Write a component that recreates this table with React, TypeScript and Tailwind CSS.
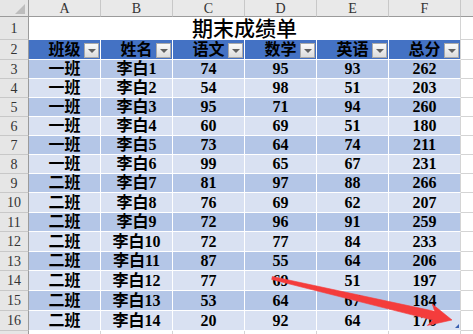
const cols = ["A", "B", "C", "D", "E", "F"];
const heads = ["班级", "姓名", "语文", "数学", "英语", "总分"];

const rows: { cells: (string | number)[]; tall: boolean }[] = [
  { cells: ["一班", "李白1", 74, 95, 93, 262], tall: false },
  { cells: ["一班", "李白2", 54, 98, 51, 203], tall: false },
  { cells: ["一班", "李白3", 95, 71, 94, 260], tall: false },
  { cells: ["一班", "李白4", 60, 69, 51, 180], tall: false },
  { cells: ["一班", "李白5", 73, 64, 74, 211], tall: false },
  { cells: ["一班", "李白6", 99, 65, 67, 231], tall: false },
  { cells: ["二班", "李白7", 81, 97, 88, 266], tall: false },
  { cells: ["二班", "李白8", 76, 69, 62, 207], tall: true },
  { cells: ["二班", "李白9", 72, 96, 91, 259], tall: false },
  { cells: ["二班", "李白10", 72, 77, 84, 233], tall: true },
  { cells: ["二班", "李白11", 87, 55, 64, 206], tall: false },
  { cells: ["二班", "李白12", 77, 69, 51, 197], tall: true },
  { cells: ["二班", "李白13", 53, 64, 67, 184], tall: true },
  { cells: ["二班", "李白14", 20, 92, 64, 176], tall: true },
];

function RowHead({ n }: { n: number }) {
  return (
    <div className="w-[29px] shrink-0 bg-[#e6e6e6] border-r border-r-[#9b9b9b] border-b border-b-[#c8c8c8] flex items-center justify-center text-[14px] text-[#333]">
      {n}
    </div>
  );
}

function Dropdown() {
  return (
    <div className="absolute right-[1px] top-[3px] w-[15px] h-[15px] border border-[#a9a9a9] bg-gradient-to-b from-[#fafafa] to-[#dcdcdc] flex items-center justify-center">
      <div className="w-0 h-0 border-l-[4px] border-r-[4px] border-t-[4px] border-l-transparent border-r-transparent border-t-[#606060]" />
    </div>
  );
}

export default function App() {
  return (
    <div className="relative w-[473px] h-[334px] overflow-hidden bg-white font-['Liberation_Serif','Noto_Sans_CJK_SC',serif] text-black">
      {/* column letters */}
      <div className="flex h-[17px]">
        <div className="relative w-[29px] shrink-0 bg-[#e6e6e6] border-r border-b border-[#9b9b9b]">
          <svg className="absolute right-[3px] bottom-[2px]" width="10" height="10" viewBox="0 0 10 10">
            <polygon points="10,0 10,10 0,10" fill="#bdbdbd" />
          </svg>
        </div>
        {cols.map((c) => (
          <div
            key={c}
            className="w-[72px] shrink-0 bg-[#e9e9e9] border-r border-r-[#c8c8c8] border-b border-b-[#9b9b9b] flex items-center justify-center text-[14px] text-[#333]"
          >
            {c}
          </div>
        ))}
        <div className="flex-1 bg-[#e9e9e9] border-b border-[#9b9b9b]" />
      </div>

      {/* title */}
      <div className="flex h-[23px]">
        <RowHead n={1} />
        <div className="w-[432px] shrink-0 border-r border-[#d4d4d4] flex items-center justify-center text-[21px] font-medium pt-[2px]">
          期末成绩单
        </div>
        <div className="flex-1 border-b border-[#d4d4d4]" />
      </div>

      {/* table header */}
      <div className="flex h-[20px]">
        <RowHead n={2} />
        {heads.map((h, i) => (
          <div
            key={h}
            className={
              "relative w-[72px] shrink-0 bg-[#4472c4] border-b border-white flex items-center justify-center text-[16px] font-bold " +
              (i === 5 ? "border-r border-r-[#d4d4d4]" : "border-r border-r-white")
            }
          >
            {h}
            <Dropdown />
          </div>
        ))}
        <div className="flex-1 border-b border-[#d4d4d4]" />
      </div>

      {/* data */}
      {rows.map((r, ri) => (
        <div key={ri} className={"flex " + (r.tall ? "h-[20px]" : "h-[19px]")}>
          <RowHead n={ri + 3} />
          {r.cells.map((v, ci) => (
            <div
              key={ci}
              className={
                "relative w-[72px] shrink-0 border-b border-white flex items-center justify-center text-[16px] font-bold " +
                (ri % 2 === 0 ? "bg-[#b4c6e7] " : "bg-[#d9e1f2] ") +
                (ci === 5 ? "border-r border-r-[#d4d4d4]" : "border-r border-r-white")
              }
            >
              {v}
              {ri === rows.length - 1 && ci === 5 && (
                <svg className="absolute right-[1px] bottom-[2px]" width="4" height="4" viewBox="0 0 4 4">
                  <polygon points="4,0 4,4 0,4" fill="#3a5fb0" />
                </svg>
              )}
            </div>
          ))}
          <div className="flex-1 border-b border-[#d4d4d4]" />
        </div>
      ))}

      {/* row 17 (cut off) */}
      <div className="flex h-[19px]">
        <RowHead n={17} />
        {cols.map((c) => (
          <div key={c} className="w-[72px] shrink-0 border-r border-b border-[#d4d4d4]" />
        ))}
        <div className="flex-1 border-b border-[#d4d4d4]" />
      </div>

      {/* red annotation arrow */}
      <svg className="absolute inset-0 pointer-events-none" width="473" height="334" viewBox="0 0 473 334">
        <polygon
          points="272.3,276.5 434.7,311.3 432.3,304.1 452,320 427.3,325.5 432.7,320.1 271.7,279.5"
          fill="#f43c3c"
          stroke="#f43c3c"
          strokeWidth="0.6"
          strokeLinejoin="round"
        />
      </svg>
    </div>
  );
}
